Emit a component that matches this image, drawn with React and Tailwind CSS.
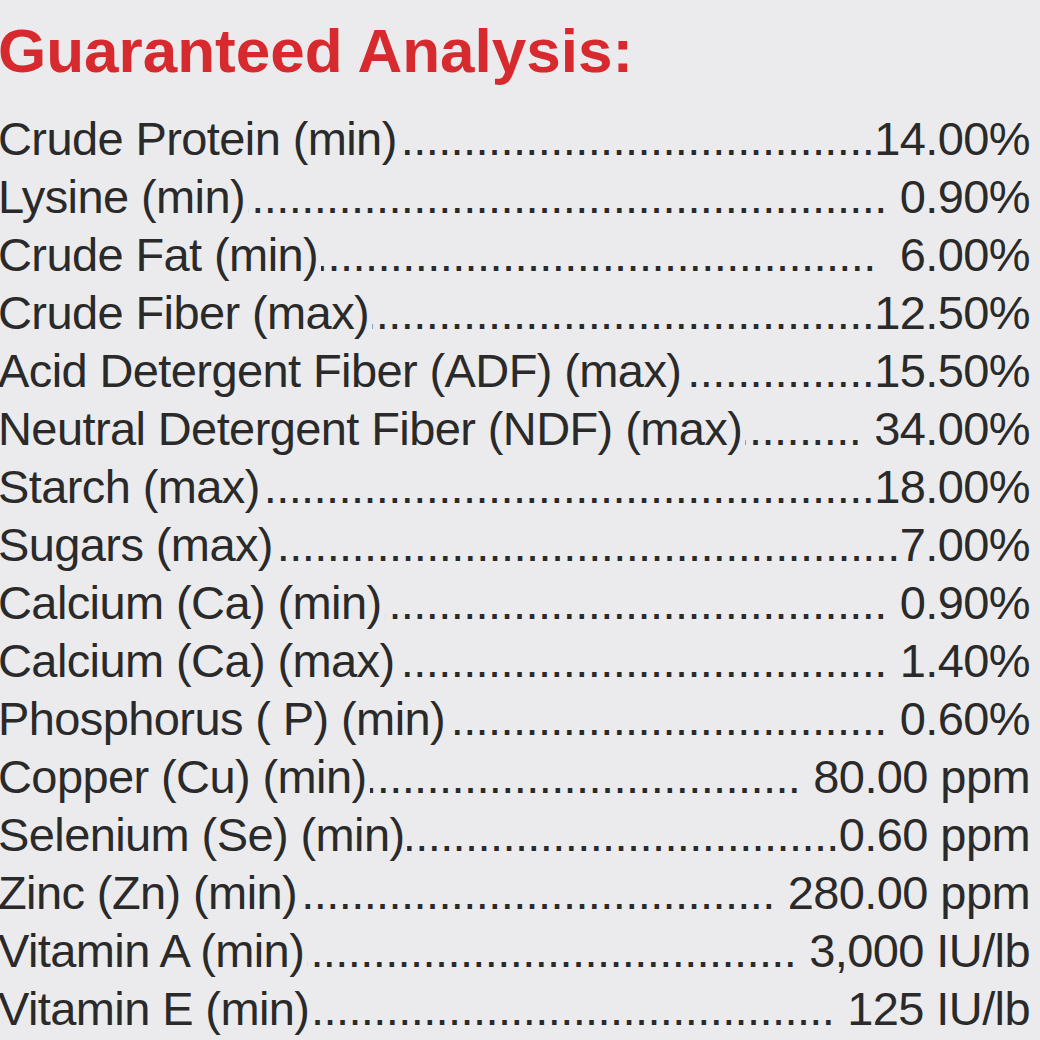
const rows = [
  { label: "Crude Protein (min)", value: "14.00%", gap: 0 },
  { label: "Lysine (min)", value: "0.90%", gap: 13 },
  { label: "Crude Fat (min)", value: "6.00%", gap: 24 },
  { label: "Crude Fiber (max)", value: "12.50%", gap: 0 },
  { label: "Acid Detergent Fiber (ADF) (max)", value: "15.50%", gap: 0 },
  { label: "Neutral Detergent Fiber (NDF) (max)", value: "34.00%", gap: 13 },
  { label: "Starch (max)", value: "18.00%", gap: 0 },
  { label: "Sugars (max)", value: "7.00%", gap: 0 },
  { label: "Calcium (Ca) (min)", value: "0.90%", gap: 13 },
  { label: "Calcium (Ca) (max)", value: "1.40%", gap: 13 },
  { label: "Phosphorus ( P) (min)", value: "0.60%", gap: 13 },
  { label: "Copper (Cu) (min)", value: "80.00 ppm", gap: 13 },
  { label: "Selenium (Se) (min)", value: "0.60 ppm", gap: 0 },
  { label: "Zinc (Zn) (min)", value: "280.00 ppm", gap: 13 },
  { label: "Vitamin A (min)", value: "3,000 IU/lb", gap: 13 },
  { label: "Vitamin E (min)", value: "125 IU/lb", gap: 13 },
];

const dots = ".".repeat(90);

function Row({ label, value, gap }) {
  return (
    <div className="flex items-baseline whitespace-nowrap leading-[58px] h-[58px]">
      <span className="shrink-0">{label}</span>
      <span className="flex-1 overflow-hidden flex justify-end min-w-0 ml-[3px]">
        <span className="shrink-0">{dots}</span>
      </span>
      <span className="shrink-0" style={{ paddingLeft: gap }}>
        {value}
      </span>
    </div>
  );
}

export default function App() {
  return (
    <div className="w-[1040px] h-[1040px] overflow-hidden bg-[#ebebed] font-['Liberation_Sans',Arial,sans-serif] pt-[16px] pr-[10px] pl-[1px]">
      <h1 className="text-[62px] leading-[70px] font-bold text-[#d72a2e] -ml-[3px]">
        Guaranteed Analysis:
      </h1>
      <div className="mt-[24px] text-[47px] tracking-[-0.6px] text-[#2a2a2a] -ml-[3px]">
        {rows.map((r) => (
          <Row key={r.label} {...r} />
        ))}
      </div>
    </div>
  );
}
